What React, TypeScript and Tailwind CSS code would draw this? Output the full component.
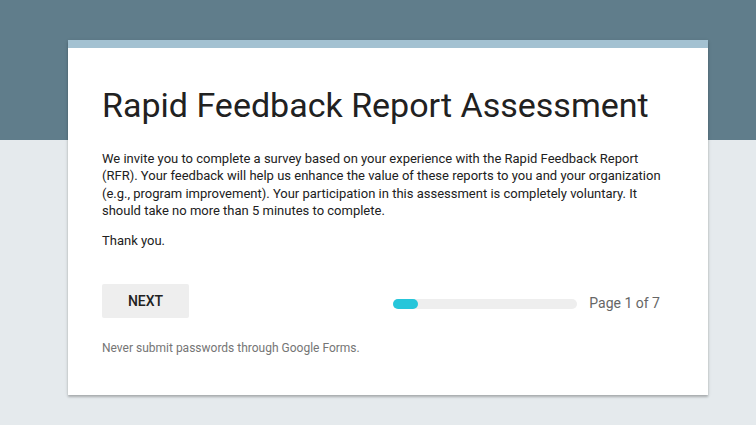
import React from "react";

export default function App() {
  return (
    <div
      className="relative w-[756px] h-[425px] overflow-hidden bg-[#e5eaed]"
      style={{ fontFamily: "Roboto, 'Liberation Sans', sans-serif" }}
    >
      <div className="absolute left-0 top-0 w-full h-[140px] bg-[#607d8b]" />
      <div className="relative pt-[40px] pl-[68px] flex">
        <div className="w-[640px] bg-white shadow-[0_2px_2px_rgba(0,0,0,0.2),0_1px_4px_rgba(0,0,0,0.12)]">
          <div className="h-[8px] bg-[#a3c1d1]" />
          <div className="px-[34px] pt-[37px] pb-[39px]">
            <h1 className="text-[34px] leading-[40px] text-[#212121] font-normal">
              Rapid Feedback Report Assessment
            </h1>
            <p className="mt-[25px] text-[13px] leading-[17.3px] text-[#212121]">
              We invite you to complete a survey based on your experience with the Rapid Feedback Report
              (RFR). Your feedback will help us enhance the value of these reports to you and your organization
              (e.g., program improvement). Your participation in this assessment is completely voluntary. It
              should take no more than 5 minutes to complete.
            </p>
            <p className="mt-[13px] text-[13px] leading-[17px] text-[#212121]">Thank you.</p>
            <div className="mt-[35px] flex items-center">
              <button className="w-[87px] h-[34px] bg-[#eeeeee] rounded-[2px] text-[14px] font-medium text-[#212121]">
                NEXT
              </button>
              <div className="ml-auto mt-[5px] flex items-center gap-[12px] pr-[14px]">
                <div className="w-[184px] h-[10px] rounded-full bg-[#eeeeee]">
                  <div className="w-[25px] h-[10px] rounded-full bg-[#26c6da]" />
                </div>
                <span className="text-[14px] text-[#666666]">Page 1 of 7</span>
              </div>
            </div>
            <p className="mt-[22px] text-[12px] leading-[16px] text-[#757575]">
              Never submit passwords through Google Forms.
            </p>
          </div>
        </div>
      </div>
    </div>
  );
}
